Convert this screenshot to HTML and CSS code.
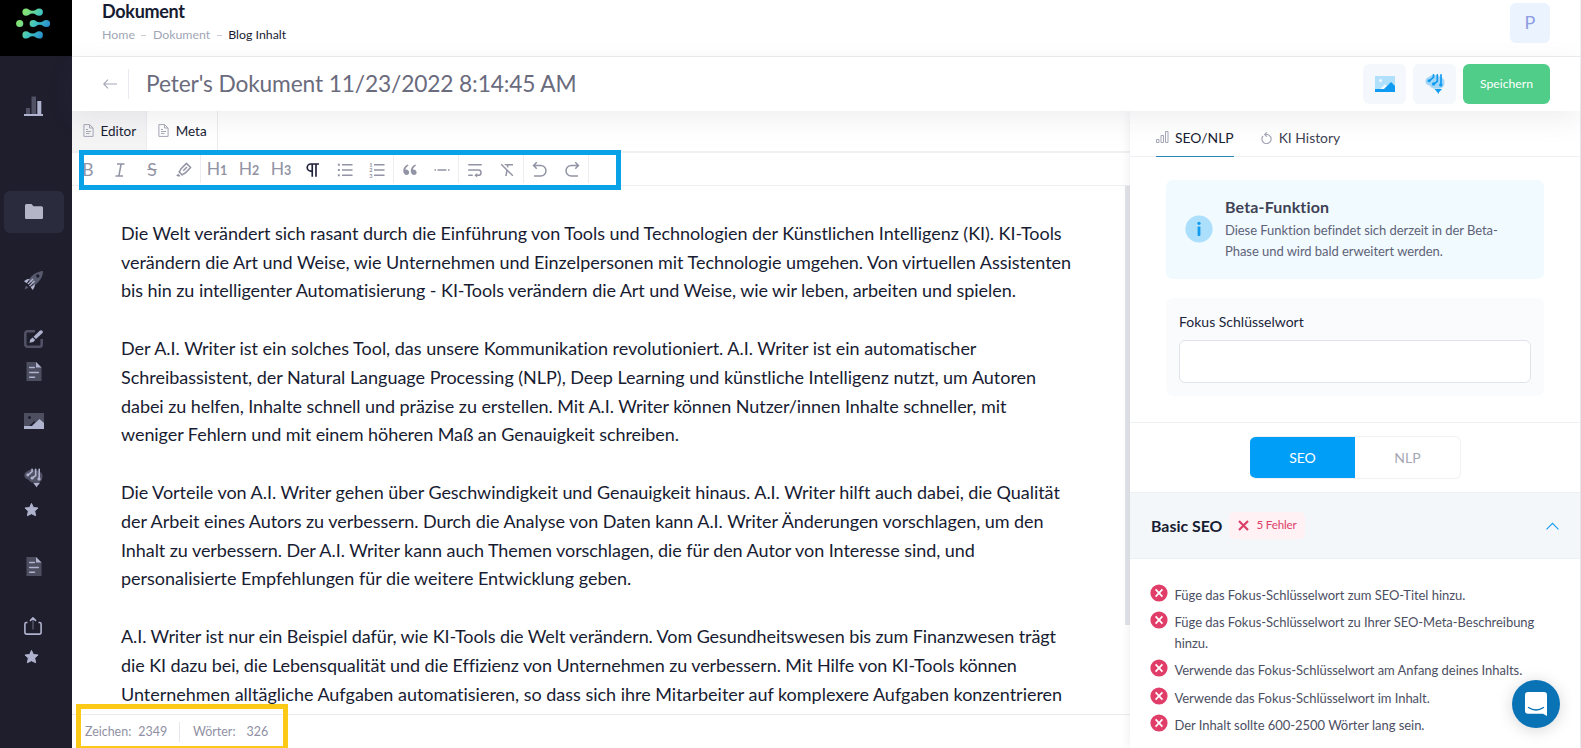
FILE: index.html
```html
<!DOCTYPE html>
<html lang="de">
<head>
<meta charset="utf-8">
<title>Dokument</title>
<link rel="stylesheet" href="styles.css">
</head>
<body>
<svg class="defs" width="0" height="0">
  <defs>
    <linearGradient id="lg" gradientUnits="userSpaceOnUse" x1="0" y1="0" x2="34" y2="20"><stop offset="0" stop-color="#8be562"/><stop offset=".3" stop-color="#7fe07c"/><stop offset=".62" stop-color="#3fc4c0"/><stop offset="1" stop-color="#2585cf"/></linearGradient>
    <symbol id="doc" viewBox="0 0 16 19"><path opacity=".32" fill="currentColor" d="M.5 0H10l5.500 5.500V19H.5z"/><path fill="currentColor" d="M10 0l5.500 5.500H10z"/><path stroke="currentColor" stroke-width="1.500" stroke-linecap="round" d="M3.700 5.500h4.600M3.700 10.500h8.600M3.700 15.300h4.800"/></symbol>
    <symbol id="star" viewBox="0 0 16 15"><path fill="currentColor" stroke="currentColor" stroke-linejoin="round" d="M8 1l2 4.300 5 .6-3.600 3.200 1 5L8 12l-4.400 2.100 1-5L1 5.900l5-.6z"/></symbol>
    <symbol id="image" viewBox="0 0 20 16"><path opacity=".32" fill="currentColor" fill-rule="evenodd" d="M0 0h20v16H0zM7 4.500a1.500 1.500 0 1 0-3 0 1.500 1.500 0 0 0 3 0zM5 13l5.500-5 1 1-4 4z"/><path fill="currentColor" d="M0 13h8l7.500-7L20 10v6H0z"/></symbol>
    <symbol id="brain" viewBox="0 0 20 20"><path opacity=".35" fill="currentColor" d="M3.500 3C1 4 0 6 .5 8.500c.8 2.600 3 2.300 4.500 3.500 1.500 2.500 4 3 6.500 2.500 3 1 7-.5 7.500-3.500 1-2 .5-5-.8-6.500L14 2 8 .5z"/><path fill="none" stroke="currentColor" stroke-width="1.700" stroke-linecap="round" d="M8.500.9v2.300L4.500 6.800M12.300.9v6.500L8.800 10M16 .9V11"/><circle cx="4" cy="6.800" r="1.500" fill="currentColor"/><circle cx="8.600" cy="10" r="1.700" fill="currentColor"/><circle cx="15.800" cy="11" r="1.700" fill="currentColor"/><path fill="currentColor" d="M9.500 15h7.500l-3 3.300L13.700 20l-1.400-1.700z"/></symbol>
    <symbol id="page" viewBox="0 0 11 13"><path fill="none" stroke="currentColor" stroke-width="1" d="M.9.6h5.800l3.400 3.400v8.400H.9zM6.600.8V4H10M3 5.500h2M3 7.500h5M3 9.500h3.500"/></symbol>
    <symbol id="fail" viewBox="0 0 18 18"><circle cx="9" cy="9" r="8.600" fill="#e03e69"/><path stroke="#fff" stroke-width="1.700" d="M5.600 5.400l6.800 7.200M12.400 5.400l-6.800 7.200"/></symbol>
    <symbol id="undo" viewBox="0 0 24 24"><path fill="currentColor" d="M5.828 7l2.536 2.536L6.950 10.950 2 6l4.950-4.950 1.414 1.414L5.828 5H13a8 8 0 1 1 0 16H4v-2h9a6 6 0 1 0 0-12H5.828z"/></symbol>
  </defs>
</svg>
<div class="app">
  <nav class="sidebar">
    <div class="logo"><svg width="34" height="31" viewBox="0 0 34 31" fill="url(#lg)"><circle cx="3.700" cy="15.500" r="3.600"/><path d="M10 .5c2.700 0 3.500 2.300 6.500 2.300S20.300.5 23.300.5a3.600 3.600 0 0 1 0 7.200c-3 0-3.800-2.300-6.800-2.300S12.700 7.700 10 7.700A3.600 3.600 0 0 1 10 .5z"/><path d="M17.200 11.900c2.700 0 3.500 2.300 6.500 2.300s3.800-2.300 6.800-2.300a3.600 3.600 0 0 1 0 7.200c-3 0-3.800-2.300-6.800-2.300s-3.800 2.300-6.500 2.300a3.600 3.600 0 0 1 0-7.200z"/><path d="M10 23.300c2.700 0 3.500 2.300 6.500 2.300s3.800-2.300 6.800-2.300a3.600 3.600 0 0 1 0 7.200c-3 0-3.800-2.300-6.800-2.300s-3.800 2.300-6.500 2.300a3.600 3.600 0 0 1 0-7.200z"/></svg></div>
    <a class="nav chart"><svg width="19" height="20" viewBox="0 0 19 20" fill="currentColor"><path opacity=".35" d="M2 12h4v6H2zM7.500.5h4.500V18H7.500z"/><path d="M13.300 5h4v13h1.700v2H0v-2h13.300z"/></svg></a>
    <a class="nav folder"><svg width="18" height="15" viewBox="0 0 18 15"><path fill="#b5b5c8" d="M1.500 0h5l2 2.300h8a1.500 1.500 0 0 1 1.500 1.500v10a1.200 1.200 0 0 1-1.200 1.200H1.200A1.200 1.200 0 0 1 0 13.800V1.500A1.500 1.500 0 0 1 1.500 0z"/></svg></a>
    <a class="nav rocket"><svg width="19" height="19" viewBox="0 0 19 19"><path opacity=".4" fill="currentColor" fill-rule="evenodd" d="M19 0c0 5-2.500 10-8.500 14.500L4.500 9C8 4 13 .5 19 0zM15.500 5a1.700 1.700 0 1 0-3.400 0 1.700 1.700 0 0 0 3.400 0zM.5 18.500l1.500-4 2.500 2.300z"/><path fill="currentColor" d="M0 10.200c2-1.700 3.500-2.300 5.700-2.200l-3 4.200zM8.600 19c1.700-2 2.500-3.700 2.200-5.900l-4.200 3z"/><path stroke="currentColor" stroke-width="1.400" d="M4 13l5-5M5.500 15l5-5"/></svg></a>
    <a class="nav edit"><svg width="19" height="18" viewBox="0 0 19 18"><path opacity=".35" fill="none" stroke="currentColor" stroke-width="2.600" d="M11 1.300H3.500a2.200 2.200 0 0 0-2.200 2.200v11a2.200 2.200 0 0 0 2.200 2.200h12a2.200 2.200 0 0 0 2.200-2.200V9"/><path fill="currentColor" d="M16 .5a1.800 1.800 0 0 1 2.500 2.500l-6.500 6L9.500 6.800zM8.700 7.600l2.500 2.300-2 2-3.700.9.700-3.400z"/></svg></a>
    <a class="nav doc1"><svg width="16" height="19"><use href="#doc"/></svg></a>
    <a class="nav img"><svg width="20" height="16"><use href="#image"/></svg></a>
    <a class="nav brn"><svg width="19" height="20"><use href="#brain"/></svg></a>
    <a class="nav str"><svg width="15" height="15"><use href="#star"/></svg></a>
    <a class="nav doc2"><svg width="16" height="19"><use href="#doc"/></svg></a>
    <a class="nav share"><svg width="18" height="18" viewBox="0 0 18 18" fill="none" stroke="currentColor" stroke-width="1.600"><path d="M3.500 5.500H2.300Q.9 5.500.9 7v8.300q0 1.800 1.800 1.800h12.600q1.800 0 1.800-1.800V7q0-1.500-1.400-1.500h-1.200M6 3.800L9 .9l3 2.900"/><path opacity=".35" d="M9 1.500v11"/></svg></a>
    <a class="nav str2"><svg width="15" height="15"><use href="#star"/></svg></a>
  </nav>
  <div class="main">
    <header class="top">
      <div class="crumbs">
        <h1>Dokument</h1>
        <div class="trail"><span>Home</span><i></i><span>Dokument</span><i></i><b>Blog Inhalt</b></div>
      </div>
      <div class="avatar">P</div>
    </header>
    <div class="titlebar">
      <svg class="back" width="14" height="10" viewBox="0 0 14 10" fill="none" stroke="#a5a7b6" stroke-width="1.100"><path d="M14 5H.8M5 .7L.8 5 5 9.300"/></svg>
      <div class="title">Peter's Dokument 11/23/2022 8:14:45 AM</div>
      <div class="actions">
        <span class="sq"><svg width="20" height="16" viewBox="0 0 20 16"><path fill="#b0e0fb" d="M0 0h20v13H0z"/><circle cx="5.500" cy="4.500" r="1.500" fill="#f2f9fe"/><path fill="#f2f9fe" d="M5 13l5-4.700L12 10l-3 3z"/><path fill="#0f9bf2" d="M0 13h9l7-7 4 4v6H0z"/></svg></span>
        <span class="sq"><svg width="20" height="20"><use href="#brain"/></svg></span>
        <button class="save">Speichern</button>
      </div>
    </div>
    <div class="work">
      <section class="editor">
        <div class="tabs"><span class="tab on"><svg width="11" height="13"><use href="#page"/></svg>Editor</span><span class="tab"><svg width="11" height="13"><use href="#page"/></svg>Meta</span></div>
        <div class="tools">
          <span class="t"><b class="g">B</b></span>
          <span class="t"><svg viewBox="0 0 24 24"><path fill="none" stroke="currentColor" stroke-width="2" d="M8 4h10M6 20h10M13.500 4l-3 16"/></svg></span>
          <span class="t strike"><b class="g">S</b></span>
          <span class="t"><svg viewBox="0 0 24 24"><path fill="currentColor" d="M15.243 4.515l-6.738 6.737-.707 2.121-1.040 1.041 2.828 2.829 1.040-1.041 2.122-.707 6.737-6.738-4.242-4.242zm6.364 3.535a1 1 0 0 1 0 1.414l-7.779 7.779-2.120.707-1.415 1.414a1 1 0 0 1-1.414 0l-4.243-4.243a1 1 0 0 1 0-1.414l1.414-1.414.707-2.121 7.779-7.779a1 1 0 0 1 1.414 0l5.657 5.657zm-6.364-.707l1.414 1.414-4.950 4.950-1.414-1.414 4.950-4.950zM4.283 16.890l2.828 2.829-1.414 1.414-4.243-1.414 2.828-2.829z"/></svg></span>
          <i></i>
          <span class="t"><b class="g">H<small>1</small></b></span><span class="t"><b class="g">H<small>2</small></b></span><span class="t"><b class="g">H<small>3</small></b></span>
          <span class="t dark"><svg viewBox="0 0 24 24"><path fill="none" stroke="currentColor" stroke-width="2.200" d="M20 4H9a4.700 4.700 0 0 0 0 9.400h2M11 4v17M16 4v17"/></svg></span>
          <span class="t"><svg viewBox="0 0 24 24"><path fill="currentColor" d="M8 4h14v2H8zM8 11h14v2H8zM8 18h14v2H8zM2.500 3.700h2.600v2.600H2.500zM2.500 10.700h2.600v2.600H2.500zM2.500 17.700h2.600v2.600H2.500z"/></svg></span>
          <span class="t"><svg viewBox="0 0 24 24"><path fill="currentColor" d="M8 4h14v2H8zM8 11h14v2H8zM8 18h14v2H8z"/><g fill="currentColor" font-size="7.500" font-weight="700"><text x="1.500" y="7.500">1</text><text x="1.500" y="14.800">2</text><text x="1.500" y="22">3</text></g></svg></span>
          <i></i>
          <span class="t"><svg viewBox="0 0 24 24"><path fill="currentColor" d="M4.583 17.321C3.553 16.227 3 15 3 13.011c0-3.500 2.457-6.637 6.030-8.188l.893 1.378c-3.335 1.804-3.987 4.145-4.247 5.621.537-.278 1.240-.375 1.929-.311 1.804.167 3.226 1.648 3.226 3.489a3.500 3.500 0 0 1-3.500 3.500c-1.073 0-2.099-.49-2.748-1.179zm10 0C13.553 16.227 13 15 13 13.011c0-3.500 2.457-6.637 6.030-8.188l.893 1.378c-3.335 1.804-3.987 4.145-4.247 5.621.537-.278 1.240-.375 1.929-.311 1.804.167 3.226 1.648 3.226 3.489a3.500 3.500 0 0 1-3.500 3.500c-1.073 0-2.099-.49-2.748-1.179z"/></svg></span>
          <span class="t"><svg viewBox="0 0 24 24"><path fill="currentColor" d="M2 11h2v2H2v-2zm4 0h12v2H6v-2zm14 0h2v2h-2v-2z"/></svg></span>
          <i></i>
          <span class="t"><svg viewBox="0 0 24 24"><path fill="currentColor" d="M15 18h1.500a2.500 2.500 0 1 0 0-5H3v-2h13.500a4.500 4.500 0 1 1 0 9H15v2l-4-3 4-3v2zM3 4h18v2H3V4zm6 14v2H3v-2h6z"/></svg></span>
          <span class="t"><svg viewBox="0 0 24 24"><path fill="currentColor" d="M12.651 14.065L11.605 20H9.574l1.350-7.661-7.410-7.410L4.930 3.515 20.485 19.070l-1.414 1.414-6.420-6.420zm-.878-6.535l.27-1.530h-1.800l-2-2H20v2h-5.927L13.500 9.257 11.773 7.530z"/></svg></span>
          <i></i>
          <span class="t"><svg viewBox="0 0 24 24"><use href="#undo"/></svg></span>
          <span class="t flip"><svg viewBox="0 0 24 24"><use href="#undo"/></svg></span>
          <i></i>
        </div>
        <div class="text">
          <p><span class="mid">Die Welt verändert sich rasant durch die Einführung von Tools und Technologien der Künstlichen Intelligenz (KI). KI-Tools<br>verändern die Art und Weise, wie Unternehmen und Einzelpersonen mit Technologie umgehen. Von virtuellen Assistenten</span><br>bis hin zu intelligenter Automatisierung - KI-Tools verändern die Art und Weise, wie wir leben, arbeiten und spielen.</p>
          <p><span class="loose">Der A.I. Writer ist ein solches Tool, das unsere Kommunikation revolutioniert. A.I. Writer ist ein automatischer<br>Schreibassistent, der Natural Language Processing (NLP), Deep Learning und künstliche Intelligenz nutzt, um Autoren</span><br>dabei zu helfen, Inhalte schnell und präzise zu erstellen. Mit A.I. Writer können Nutzer/innen Inhalte schneller, mit<br>weniger Fehlern und mit einem höheren Maß an Genauigkeit schreiben.</p>
          <p><span class="mid">Die Vorteile von A.I. Writer gehen über Geschwindigkeit und Genauigkeit hinaus. A.I. Writer hilft auch dabei, die Qualität<br>der Arbeit eines Autors zu verbessern. Durch die Analyse von Daten kann A.I. Writer Änderungen vorschlagen, um den</span><br>Inhalt zu verbessern. Der A.I. Writer kann auch Themen vorschlagen, die für den Autor von Interesse sind, und<br><span class="loose">personalisierte Empfehlungen für die weitere Entwicklung geben.</span></p>
          <p><span class="tight">A.I. Writer ist nur ein Beispiel dafür, wie KI-Tools die Welt verändern. Vom Gesundheitswesen bis zum Finanzwesen trägt<br>die KI dazu bei, die Lebensqualität und die Effizienz von Unternehmen zu verbessern. Mit Hilfe von KI-Tools können</span><br><span class="loose">Unternehmen alltägliche Aufgaben automatisieren, so dass sich ihre Mitarbeiter auf komplexere Aufgaben konzentrieren</span></p>
          <div class="thumb"></div>
        </div>
        <footer class="count"><span>Zeichen:</span><span class="v1">2349</span><i></i><span>Wörter:</span><span class="v2">326</span></footer>
      </section>
      <aside class="panel">
        <div class="ptabs">
          <span class="pt on"><svg width="13" height="12" viewBox="0 0 13 12" fill="none" stroke="#a5a7b6"><path d="M.5 8.500h2.500v3H.5zM5 4.500h2.500v7H5zM9.500.5H12v11H9.500z"/></svg>SEO/NLP</span>
          <span class="pt hist"><svg width="11" height="12" viewBox="0 0 11 12" fill="none" stroke="#a5a7b6" stroke-width="1.200"><path d="M2 4A4.600 4.600 0 1 0 6.500 2.500H3.800M5.800.4L3.700 2.500l2.100 2.100"/></svg>KI History</span>
        </div>
        <div class="cards">
          <div class="info">
            <svg width="28" height="28" viewBox="0 0 28 28"><circle cx="14" cy="14" r="13.600" fill="#abdffb"/><circle cx="14" cy="8.300" r="1.600" fill="#119cf0"/><rect x="12.600" y="11.400" width="2.800" height="9.600" rx=".8" fill="#119cf0"/></svg>
            <div><strong>Beta-Funktion</strong><p>Diese Funktion befindet sich derzeit in der Beta-<br>Phase und wird bald erweitert werden.</p></div>
          </div>
          <div class="focus"><label>Fokus Schlüsselwort</label><div class="input"></div></div>
        </div>
        <div class="switch"><span class="sw on">SEO</span><span class="sw">NLP</span></div>
        <div class="acc"><strong>Basic SEO</strong><span class="badge"><svg width="11" height="11" viewBox="0 0 11 11"><path stroke="#dc4068" stroke-width="2.200" d="M1 1l9 9M10 1l-9 9"/></svg><span>5 Fehler</span></span><svg class="chev" width="13" height="8" viewBox="0 0 13 8"><path fill="none" stroke="#119cf0" stroke-width="1.100" d="M.5 7.300l6-6 6 6"/></svg></div>
        <ul class="checks">
          <li><svg width="18" height="18"><use href="#fail"/></svg><span>Füge das Fokus-Schlüsselwort zum SEO-Titel hinzu.</span></li>
          <li><svg width="18" height="18"><use href="#fail"/></svg><span>Füge das Fokus-Schlüsselwort zu Ihrer SEO-Meta-Beschreibung<br>hinzu.</span></li>
          <li><svg width="18" height="18"><use href="#fail"/></svg><span>Verwende das Fokus-Schlüsselwort am Anfang deines Inhalts.</span></li>
          <li><svg width="18" height="18"><use href="#fail"/></svg><span>Verwende das Fokus-Schlüsselwort im Inhalt.</span></li>
          <li><svg width="18" height="18"><use href="#fail"/></svg><span>Der Inhalt sollte 600-2500 Wörter lang sein.</span></li>
        </ul>
      </aside>
    </div>
  </div>
  <div class="mark blue-mark"></div>
  <div class="mark yellow-mark"></div>
  <div class="chat"><svg width="22" height="24" viewBox="0 0 22 24"><path fill="#fff" d="M3 0h16a3 3 0 0 1 3 3v21l-4-2.200H3a3 3 0 0 1-3-3V3a3 3 0 0 1 3-3z"/><path fill="none" stroke="#0a73b5" stroke-width="1.300" stroke-linecap="round" d="M3.500 15.500q7.500 5 15 0"/></svg></div>
</div>
</body>
</html>
```
FILE: styles.css
```css
* { box-sizing: border-box; }
body { margin: 0; font-family: Lato, "Open Sans", sans-serif; font-size: 14px; color: #181c32; background: #fff; overflow: hidden; font-variant-ligatures: none; }
svg { display: block; flex: none; }
.defs { position: absolute; }
h1, p, ul { margin: 0; padding: 0; }
i { font-style: normal; flex: none; }
.app { position: relative; display: flex; width: 1581px; height: 748px; overflow: hidden; white-space: nowrap; }

.sidebar { width: 72px; flex: none; height: 748px; background: #1e1e2d; color: #b0b3ce; display: flex; flex-direction: column; align-items: flex-start; }
.logo { width: 72px; height: 56px; background: #000; padding: 8px 0 0 16px; }
.nav { display: block; margin-left: 24px; }
.chart { margin-top: 40px; height: 20px; }
.folder { margin: 75px 0 0 4px; width: 60px; height: 42px; border-radius: 6px; background: #2a2b3c; padding: 13px 0 0 21px; }
.rocket { margin-top: 38px; height: 19px; }
.edit { margin-top: 40px; height: 18px; }
.doc1 { margin: 14px 0 0 26px; height: 19px; }
.img { margin-top: 32px; height: 16px; }
.brn { margin-top: 39px; height: 20px; }
.str { margin-top: 14px; height: 15px; }
.doc2 { margin: 40px 0 0 26px; height: 19px; }
.share { margin-top: 41px; height: 18px; }
.str2 { margin-top: 14px; height: 15px; }

.main { flex: 1; display: flex; flex-direction: column; height: 748px; border-right: 1px solid #eff0f3; }
.top { height: 57px; border-bottom: 1px solid #ececf0; display: flex; justify-content: space-between; padding: 0 30px; }
h1 { font-size: 18px; line-height: 22px; font-weight: 700; letter-spacing: -.3px; }
.trail { display: flex; align-items: center; margin-top: 4px; font-size: 12.350px; line-height: 18px; color: #a1a5b7; }
.trail i { width: 5px; height: 1px; background: #c9cbd6; margin: 0 6.500px; }
.trail b { font-weight: 400; color: #181c32; }
.avatar { width: 40px; height: 40px; margin-top: 3px; border-radius: 6px; background: #ebf3ff; color: #8d9be0; font-size: 18px; line-height: 39px; text-align: center; }
.titlebar { height: 54px; display: flex; align-items: center; padding: 0 30px 0 31px; position: relative; z-index: 2; background: #fff; box-shadow: 0 8px 28px rgba(80, 80, 100, .09); }
.title { margin-left: 11px; padding-left: 17px; border-left: 1px solid #eaebf0; height: 30px; line-height: 30px; font-size: 22.750px; letter-spacing: -.14px; color: #6a6b7d; }
.actions { margin-left: auto; display: flex; gap: 7px; }
.sq { width: 43px; height: 40px; border-radius: 6px; background: #f4f7fb; display: flex; align-items: center; justify-content: center; color: #0f9bf2; }
.save { width: 87px; height: 40px; border: 0; border-radius: 6px; background: #50cd89; color: #fff; font: 400 12.200px Lato, sans-serif; padding: 0 0 1px; }

.work { flex: 1; display: flex; min-height: 0; }
.editor { width: 1058px; display: flex; flex-direction: column; min-height: 0; }
.tabs { height: 42px; border-bottom: 2px solid #f0f0f3; display: flex; }
.tab { height: 40px; display: flex; align-items: center; padding: 0 10px 0 10.500px; gap: 7px; border-right: 1px solid #ececef; font-size: 13.500px; color: #181c32; background: #fff; }
.tab svg { color: #a5a7b6; margin-top: -1px; }
.tab.on { background: #f4f4f5; }
.tools { height: 33px; border-bottom: 1px solid #eff0f3; display: flex; align-items: center; color: #9294a5; }
.tools i { width: 1px; height: 28px; background: #ecedf0; }
.t { width: 32px; height: 32px; display: flex; align-items: center; justify-content: center; padding: 1px 0 0; }
.t svg { width: 18px; height: 18px; }
.dark { color: #20213a; }
.flip svg { transform: scaleX(-1); }
.g { font-weight: 400; font-size: 17.500px; line-height: 20px; }
.g small { font-size: 12.500px; font-weight: 700; margin-left: 0; }
.strike b { text-decoration: line-through; }
.text { position: relative; flex: 1; min-height: 0; overflow: hidden; padding: 32.800px 0 0 49px; font-size: 18px; line-height: 28.800px; letter-spacing: -.065px; color: #181c32; }
.text p { margin-bottom: 28.800px; }
.mid { letter-spacing: -.045px; }
.loose { letter-spacing: -.018px; }
.tight { letter-spacing: -.095px; }
.thumb { position: absolute; right: 0; top: 0; width: 5px; height: 439px; background: #e3e4e8; }
.count { height: 34px; flex: none; border-top: 1px solid #eaebef; display: flex; align-items: center; padding: 0 0 0 13px; font-size: 12.450px; color: #8f90a3; }
.v1 { margin-left: 7px; }
.count i { width: 1px; height: 20px; background: #e6e7ec; margin: 0 13px 0 12px; }
.v2 { margin-left: 11px; }

.panel { flex: 1; background: #fff; box-shadow: 0 0 10px rgba(60, 60, 90, .1); position: relative; display: flex; flex-direction: column; }
.ptabs { height: 46px; flex: none; border-bottom: 1px solid #eff0f3; display: flex; padding-left: 26px; gap: 27px; }
.pt { height: 46px; display: flex; align-items: center; gap: 6px; padding-top: 7px; font-size: 13.900px; }
.pt.on { border-bottom: 1px solid #2e86b5; }
.hist { gap: 7px; color: #3f4254; }
.cards { height: 266px; flex: none; padding: 23px 36px 0; border-bottom: 1px solid #eff0f3; }
.info { height: 99px; border-radius: 7px; background: #f1faff; display: flex; padding: 17px 0 0 19px; gap: 12px; }
.info svg { margin-top: 18px; }
.info strong { display: block; font-size: 16px; letter-spacing: .15px; line-height: 20px; color: #3f4254; }
.info p { font-size: 13px; line-height: 21px; letter-spacing: -.05px; color: #5e6278; margin-top: 3px; }
.focus { height: 98px; margin-top: 19px; border-radius: 7px; background: #fafbfd; padding: 14px 13px 0; }
.focus label { display: block; line-height: 20px; color: #20243a; }
.input { margin-top: 8px; height: 43px; border: 1px solid #e1e3ea; border-radius: 6px; background: #fff; }
.switch { display: flex; width: 211px; height: 43px; flex: none; margin: 13px 0 13px 120px; border: 1px solid #f0f1f4; border-left: 0; border-radius: 6px; overflow: hidden; }
.sw { width: 105px; text-align: center; line-height: 42px; font-size: 14px; color: #a5a7b4; }
.sw.on { background: #009ef7; color: #fff; }
.acc { height: 67px; flex: none; background: #f4f7fa; border: 1px solid #eceff3; border-width: 1px 0; display: flex; align-items: center; padding: 0 21px; }
.acc strong { font-size: 15.900px; font-weight: 700; }
.badge { margin-left: 7px; height: 27px; border-radius: 5px; background: #fff1f4; color: #dc4068; font-size: 11.600px; letter-spacing: -.15px; display: flex; align-items: center; padding: 0 8px 0 9px; gap: 7px; }
.badge span { margin-top: -2px; }
.chev { margin-left: auto; }
.checks { list-style: none; padding: 25px 0 0 20px; color: #4c4f63; font-size: 13px; line-height: 21px; letter-spacing: -.04px; }
.checks li { display: flex; gap: 6.500px; margin-bottom: 6.200px; }
.checks span { padding-top: 1px; margin-bottom: -1px; }

.mark { position: absolute; z-index: 5; }
.blue-mark { left: 79px; top: 150px; width: 542px; height: 40px; border: 5px solid #0aa2e6; }
.yellow-mark { left: 76px; top: 704px; width: 212px; height: 47px; border: 5px solid #fcc917; }
.chat { position: absolute; z-index: 5; left: 1512px; top: 680px; width: 48px; height: 48px; border-radius: 50%; background: #0a73b5; box-shadow: 0 2px 16px rgba(0, 0, 0, .16); display: flex; align-items: center; justify-content: center; }
```
